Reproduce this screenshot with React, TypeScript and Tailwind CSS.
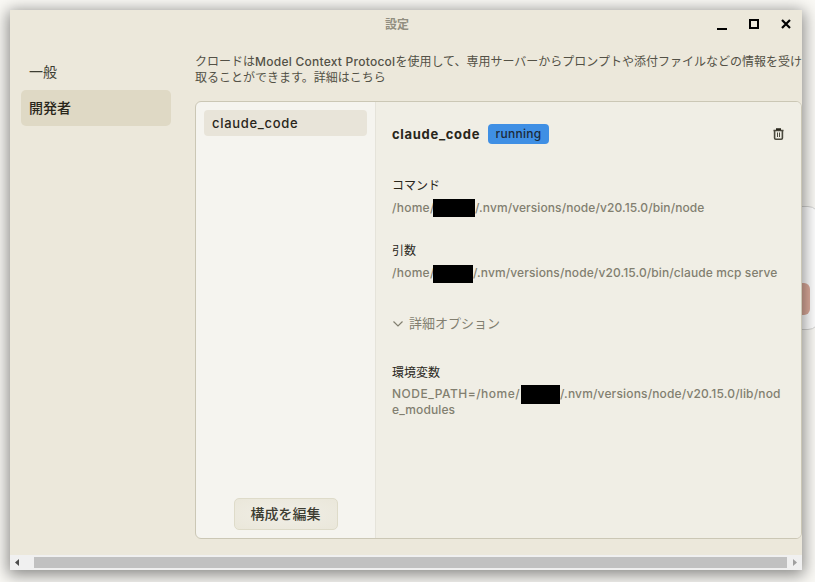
import React from 'react';
import clsx from 'clsx';

const navItems = [
  { label: '一般', active: false },
  { label: '開発者', active: true },
];

function WindowControls() {
  return (
    <svg width="76" height="12" viewBox="0 0 76 12" className="block" fill="none" stroke="#000" strokeWidth="2">
      <path d="M0 11H10" />
      <path d="M33 2H41V10H33Z" />
      <path d="M65 2L73 10M73 2L65 10" strokeWidth="2.2" />
    </svg>
  );
}

function TrashIcon() {
  return (
    <svg width="11" height="12" viewBox="0 0 11 12" className="block" fill="none" stroke="#4a493e">
      <path d="M0.5 2.5H10.5" strokeWidth="1.3" />
      <path d="M3 1.2H8" stroke="#29261b" strokeWidth="2" />
      <path d="M1.6 2.5V10Q1.6 11.2 2.8 11.2H8.2Q9.4 11.2 9.4 10V2.5" strokeWidth="1.6" />
      <path d="M4.5 4.5V9M6.5 4.5V9" />
    </svg>
  );
}

function Redacted({ className }: { className: string }) {
  return <span className={clsx('block shrink-0 bg-black', className)} />;
}

function Sidebar() {
  return (
    <nav className="w-[150px] shrink-0 pt-[16px] text-[14px] text-[#3d3d32]">
      {navItems.map((item) => (
        <div
          key={item.label}
          className={clsx(
            'flex h-9 items-center rounded-[5px] px-2 pb-[2px]',
            item.active && 'bg-[#dfd9c5] font-medium text-[#29261b]'
          )}
        >
          {item.label}
        </div>
      ))}
    </nav>
  );
}

function ServerDetails() {
  return (
    <div className="min-w-0 flex-1 bg-[#f0eee5] pl-4 pt-[22px]">
      <div className="flex h-5 items-center pr-[17px]">
        <h2 className="w-[88px] pt-[2px] text-[13px] font-bold tracking-[0.69px] text-[#29261b]">claude_code</h2>
        <span className="ml-2 flex h-5 w-[61px] items-center justify-center rounded-[4px] bg-[#3f8fe4] text-[12px] font-medium tracking-[0.3px] text-[#1c2a3a]">
          running
        </span>
        <span className="ml-auto">
          <TrashIcon />
        </span>
      </div>

      <h3 className="mt-[34px] h-4 text-[12px] leading-4 text-[#29261b]">コマンド</h3>
      <div className="mt-[4px] flex h-[20px] items-center whitespace-nowrap text-[12px] font-medium text-[#827f70]">
        <span className="w-[41px] tracking-[0.26px]">/home/</span>
        <Redacted className="h-[18px] w-[42px]" />
        <span className="tracking-[0.09px]">/.nvm/versions/node/v20.15.0/bin/node</span>
      </div>

      <h3 className="mt-[25px] h-4 text-[12px] leading-4 text-[#29261b]">引数</h3>
      <div className="mt-[5px] flex h-[20px] items-center whitespace-nowrap text-[12px] font-medium text-[#827f70]">
        <span className="w-[41px] pb-[2px] tracking-[0.26px]">/home/</span>
        <Redacted className="h-[18px] w-[40px]" />
        <span className="pb-[2px] tracking-[0.11px]">/.nvm/versions/node/v20.15.0/bin/claude mcp serve</span>
      </div>

      <div className="mt-[30px] flex h-5 items-center gap-[6px] pl-[1px] text-[13px] text-[#827f70]">
        <svg width="10" height="6" viewBox="0 0 10 6" fill="none" stroke="#827f70" strokeWidth="1.2">
          <path d="M0.5 0.5L5 5L9.5 0.5" />
        </svg>
        <span>詳細オプション</span>
      </div>

      <h3 className="mt-[31px] h-4 text-[12px] leading-4 text-[#29261b]">環境変数</h3>
      <div className="mt-[4px] flex h-[19px] items-center whitespace-nowrap text-[12px] font-medium text-[#827f70]">
        <span className="w-[129px] pb-[2px] tracking-[0.5px]">NODE_PATH=/home/</span>
        <Redacted className="h-[19px] w-[39px]" />
        <span className="pb-[2px] tracking-[0.16px]">/.nvm/versions/node/v20.15.0/lib/nod</span>
      </div>
      <div className="-mt-[2px] h-4 text-[12px] font-medium leading-4 tracking-[0.12px] text-[#827f70]">e_modules</div>
    </div>
  );
}

function HorizontalScrollbar() {
  return (
    <div className="flex h-[15px] shrink-0 items-center bg-[#f0f0f0]">
      <svg width="24" height="15" viewBox="0 0 24 15" fill="#4d4d4d">
        <path d="M5 7.5L9 4V11Z" />
      </svg>
      <div className="h-[11px] w-[753px] bg-[#c1c1c1]" />
      <svg width="15" height="15" viewBox="0 0 15 15" fill="#a0a0a0">
        <path d="M10 7.5L6 4V11Z" />
      </svg>
    </div>
  );
}

export default function App() {
  return (
    <div className="relative h-[582px] w-[815px] overflow-hidden bg-[#faf9f5] p-[10px] font-['Inter','Noto_Sans_CJK_JP',sans-serif]">
      {/* Chat window peeking out behind the dialog */}
      <div className="absolute left-[700px] top-[206px] h-[124px] w-[120px] rounded-[12px] border border-[#d4d4d2] bg-white">
        <div className="absolute left-[70px] top-[76px] h-8 w-[39px] rounded-[6px] bg-[#dcab9b]" />
      </div>

      <div className="relative flex h-[560px] w-[792px] flex-col overflow-hidden bg-[#ece8db] shadow-[0_3px_15px_2px_rgba(0,0,0,0.46)]">
        <header className="flex h-7 shrink-0 items-center">
          <div className="flex-1 pl-[375px] pt-[1px] text-[12px] font-bold text-[#918e80]">設定</div>
          <div className="pr-[9px]">
            <WindowControls />
          </div>
        </header>

        <div className="flex min-h-0 flex-1 pl-[11px]">
          <Sidebar />
          <main className="ml-6 w-[607px] pt-[16px]">
            <p className="whitespace-nowrap text-[12px] leading-4 text-[#535146]">
              クロードは<span className="font-medium tracking-[0.25px]">Model Context Protocol</span>
              を使用して、専用サーバーからプロンプトや添付ファイルなどの情報を受け
              <br />
              取ることができます。詳細はこちら
            </p>

            <div className="mt-[15px] flex h-[438px] overflow-hidden rounded-[6px] border border-[#cbc7b5] bg-[#f5f4ef]">
              <div className="flex w-[180px] shrink-0 flex-col items-center border-r border-[#e5e3da] pb-2 pt-2">
                <div className="flex h-[26px] w-[163px] items-center rounded-[4px] bg-[#e8e4d9] px-2 pt-[2px] text-[13px] font-medium tracking-[0.69px] text-[#29261b]">
                  claude_code
                </div>
                <button className="mt-auto h-8 w-[104px] rounded-[5px] border border-[#dedbc9] bg-radial from-[#f0eee6] to-[#eae7da] pb-[2px] text-[14px] font-medium text-[#3d3d32]">
                  構成を編集
                </button>
              </div>
              <ServerDetails />
            </div>
          </main>
        </div>

        <HorizontalScrollbar />
      </div>
    </div>
  );
}
